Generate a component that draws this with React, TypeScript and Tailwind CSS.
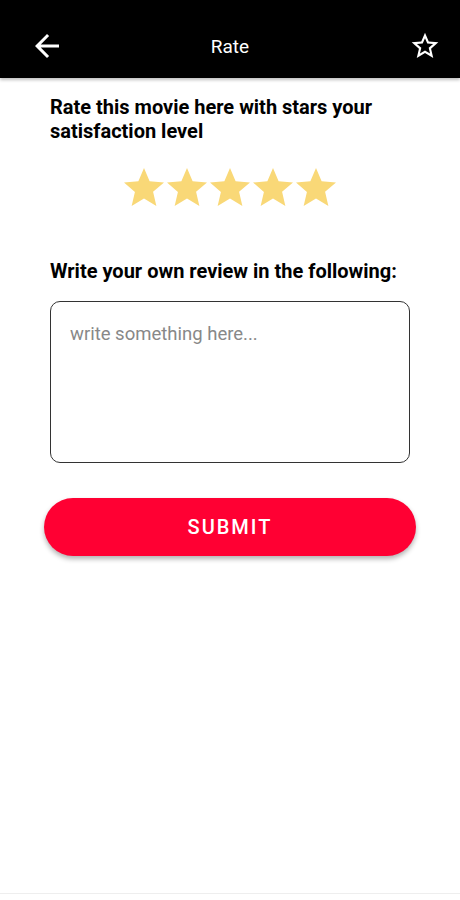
import React from 'react';

const StarFilled: React.FC = () => (
  <svg width="40" height="38" viewBox="2 2 20 19" className="block">
    <path
      d="M12 17.27L18.18 21l-1.64-7.16L22 9.24l-7.19-.61L12 2 9.19 8.63 2 9.24l5.46 4.73L5.82 21z"
      fill="#f9d877"
    />
  </svg>
);

const App: React.FC = () => {
  return (
    <div className="w-[460px] h-[900px] bg-white flex flex-col font-['Roboto',sans-serif]">
      <header className="h-[78px] bg-black grid grid-cols-[1fr_auto_1fr] items-center px-[30px] pt-[14px] shadow-[0_2px_3px_rgba(0,0,0,0.25)] relative z-10">
        <svg width="36" height="36" viewBox="0 0 24 24" className="-ml-[1px] justify-self-start">
          <path
            d="M20 11H7.83l5.59-5.59L12 4l-8 8 8 8 1.41-1.41L7.83 13H20v-2z"
            fill="#fff"
          />
        </svg>
        <h1 className="text-white text-[19px] leading-none">Rate</h1>
        <svg width="32" height="32" viewBox="0 0 24 24" className="mr-[-11px] justify-self-end">
          <path
            d="M22 9.24l-7.19-.62L12 2 9.19 8.63 2 9.24l5.46 4.73L5.82 21 12 17.27 18.18 21l-1.63-7.03L22 9.24zM12 15.4l-3.76 2.27 1-4.28-3.32-2.88 4.38-.38L12 6.1l1.71 4.04 4.38.38-3.32 2.88 1 4.28L12 15.4z"
            fill="#fff"
          />
        </svg>
      </header>

      <main className="flex-1 flex flex-col px-[50px] pt-[17px]">
        <h2 className="text-[20px] leading-[24px] font-bold text-black">
          Rate this movie here with stars your satisfaction level
        </h2>

        <div className="flex justify-center gap-[3px] mt-[25px]">
          {[0, 1, 2, 3, 4].map((i) => (
            <StarFilled key={i} />
          ))}
        </div>

        <h2 className="mt-[53px] text-[20px] leading-[24px] font-bold text-black">
          Write your own review in the following:
        </h2>

        <textarea
          placeholder="write something here..."
          className="mt-[18px] h-[162px] w-full resize-none rounded-[10px] border border-[#333] px-[19px] pt-[20px] text-[18.5px] leading-[24px] text-black placeholder:text-[#888] outline-none"
        />

        <button className="mt-[35px] -mx-[6px] h-[58px] rounded-full bg-[#ff0033] text-white text-[20px] font-medium tracking-[2px] shadow-[0_3px_5px_rgba(0,0,0,0.3)]">
          SUBMIT
        </button>
      </main>

      <div className="h-[7px] border-t border-[#eee]" />
    </div>
  );
};

export default App;
